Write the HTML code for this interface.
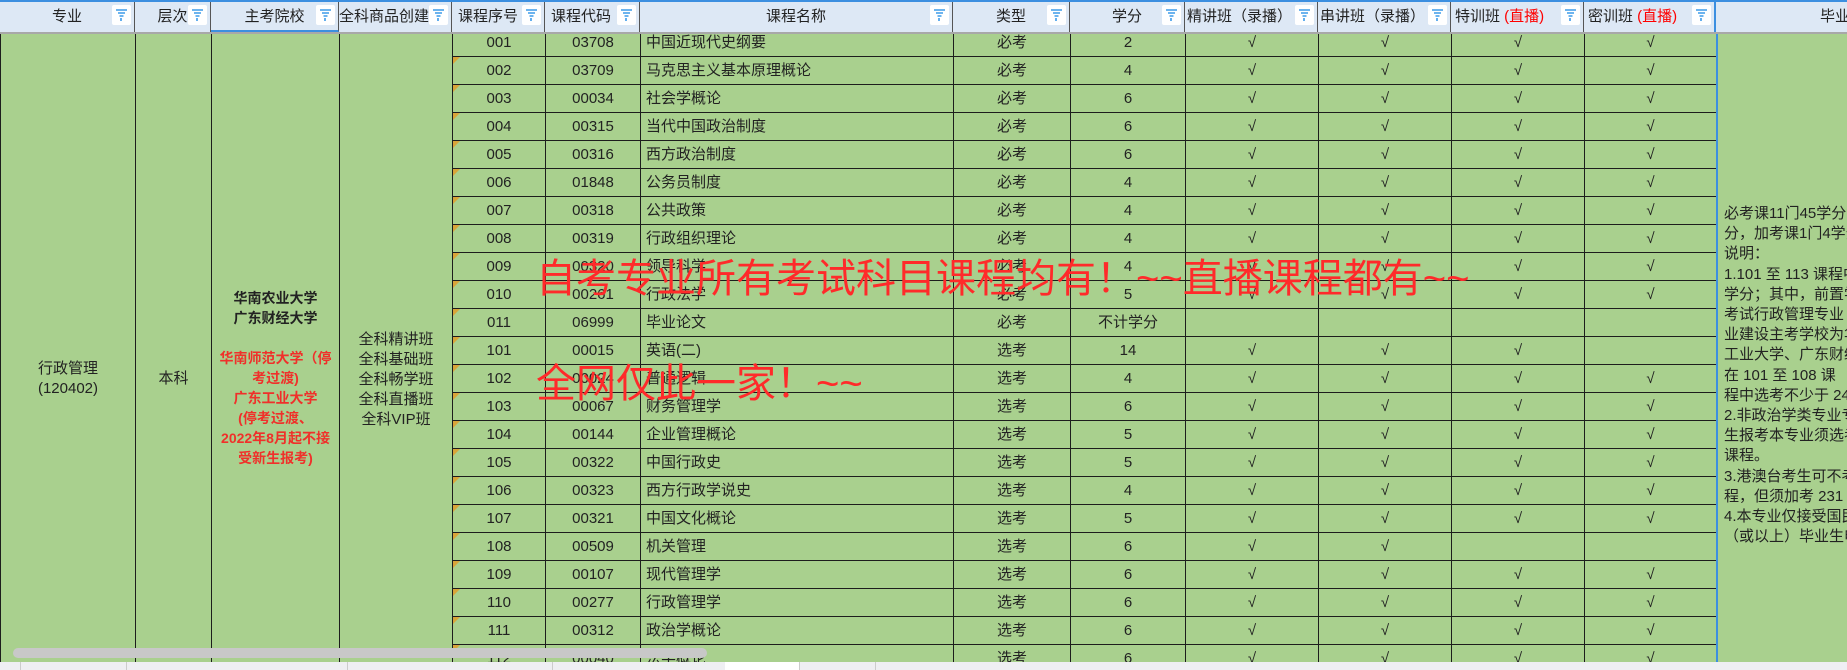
<!DOCTYPE html>
<html style="width:1847px;height:670px;overflow:hidden"><head><meta charset="utf-8">
<style>
*{margin:0;padding:0;box-sizing:border-box}
body{width:1847px;height:670px;overflow:hidden;position:relative;background:#a9d08e;font-family:"Liberation Sans","Noto Sans CJK SC",sans-serif;color:#222}
.wrap{position:absolute;left:0;top:0;width:1847px;height:670px;overflow:hidden}
table{position:absolute;left:0;top:28px;border-collapse:collapse;table-layout:fixed;width:2000px}
td{border:1px solid #1d1d1d;height:28px;font-size:15px;text-align:center;white-space:nowrap;overflow:hidden;position:relative;line-height:26px;padding:0}
td.l{text-align:left;padding-left:5px}
td.tri::before{content:"";position:absolute;left:0;top:0;border-top:7px solid #d9a53a;border-right:7px solid transparent}
td.m{vertical-align:top;line-height:20px;white-space:nowrap;font-size:14px}
.hdr{position:absolute;left:0;top:0;width:1847px;height:34px;background:#dde8f5;border-top:2px solid #3c8fe0;border-bottom:2px solid #a8a8a8;z-index:5}
.hc{position:absolute;top:0;height:30px;border-right:1px solid #555;font-size:15px;line-height:30px;white-space:nowrap;overflow:hidden}
.hc.c{text-align:center}
.f{position:absolute;right:3px;top:3px;width:19px;height:20px;background:#fff;border-radius:2px}
.f svg{position:absolute;left:3px;top:3px}
.red{color:#f00}
.rt{position:absolute;left:1716px;top:34px;width:131px;height:628px;border-left:2px solid #3c8fe0;z-index:3;background:#a9d08e;font-size:15px;line-height:20.2px;padding:170px 0 0 6px;white-space:nowrap;overflow:hidden}
.ov{position:absolute;color:#ff2a2a;font-size:40px;line-height:44px;white-space:nowrap;z-index:4}
.sb{position:absolute;left:0;top:662px;width:1847px;height:8px;background:#efeff3;z-index:6}
.sb i{position:absolute;top:0;width:1px;height:8px;background:#ccc}
.thumb{position:absolute;left:13px;top:648px;width:694px;height:10px;background:#c8c8c8;border-radius:5px;z-index:6}
</style></head><body><div class="wrap">
<div class="hdr">
<div class="hc c" style="left:0;width:135px">专业<span class="f"><svg width="13" height="14"><path d="M1 2h11M3 5h7M4.5 8h4M6 10v3" stroke="#3d9be9" stroke-width="1.6" fill="none"/></svg></span></div>
<div class="hc c" style="left:135px;width:76px">层次<span class="f"><svg width="13" height="14"><path d="M1 2h11M3 5h7M4.5 8h4M6 10v3" stroke="#3d9be9" stroke-width="1.6" fill="none"/></svg></span></div>
<div class="hc c" style="left:211px;width:128px;border-bottom:2px solid #3c8fe0">主考院校<span class="f"><svg width="13" height="14"><path d="M1 2h11M3 5h7M4.5 8h4M6 10v3" stroke="#3d9be9" stroke-width="1.6" fill="none"/></svg></span></div>
<div class="hc" style="left:339px;width:113px">全科商品创建<span class="f"><svg width="13" height="14"><path d="M1 2h11M3 5h7M4.5 8h4M6 10v3" stroke="#3d9be9" stroke-width="1.6" fill="none"/></svg></span></div>
<div class="hc" style="left:452px;width:93px;padding-left:6px">课程序号<span class="f"><svg width="13" height="14"><path d="M1 2h11M3 5h7M4.5 8h4M6 10v3" stroke="#3d9be9" stroke-width="1.6" fill="none"/></svg></span></div>
<div class="hc" style="left:545px;width:95px;padding-left:6px">课程代码<span class="f"><svg width="13" height="14"><path d="M1 2h11M3 5h7M4.5 8h4M6 10v3" stroke="#3d9be9" stroke-width="1.6" fill="none"/></svg></span></div>
<div class="hc c" style="left:640px;width:313px">课程名称<span class="f"><svg width="13" height="14"><path d="M1 2h11M3 5h7M4.5 8h4M6 10v3" stroke="#3d9be9" stroke-width="1.6" fill="none"/></svg></span></div>
<div class="hc c" style="left:953px;width:117px">类型<span class="f"><svg width="13" height="14"><path d="M1 2h11M3 5h7M4.5 8h4M6 10v3" stroke="#3d9be9" stroke-width="1.6" fill="none"/></svg></span></div>
<div class="hc c" style="left:1070px;width:115px">学分<span class="f"><svg width="13" height="14"><path d="M1 2h11M3 5h7M4.5 8h4M6 10v3" stroke="#3d9be9" stroke-width="1.6" fill="none"/></svg></span></div>
<div class="hc" style="left:1185px;width:133px;padding-left:2px">精讲班（录播）<span class="f"><svg width="13" height="14"><path d="M1 2h11M3 5h7M4.5 8h4M6 10v3" stroke="#3d9be9" stroke-width="1.6" fill="none"/></svg></span></div>
<div class="hc" style="left:1318px;width:133px;padding-left:2px">串讲班（录播）<span class="f"><svg width="13" height="14"><path d="M1 2h11M3 5h7M4.5 8h4M6 10v3" stroke="#3d9be9" stroke-width="1.6" fill="none"/></svg></span></div>
<div class="hc" style="left:1451px;width:133px;padding-left:4px">特训班 <span class="red">(直播)</span><span class="f"><svg width="13" height="14"><path d="M1 2h11M3 5h7M4.5 8h4M6 10v3" stroke="#3d9be9" stroke-width="1.6" fill="none"/></svg></span></div>
<div class="hc" style="left:1584px;width:132px;padding-left:4px;border-right:2px solid #3c8fe0">密训班 <span class="red">(直播)</span><span class="f"><svg width="13" height="14"><path d="M1 2h11M3 5h7M4.5 8h4M6 10v3" stroke="#3d9be9" stroke-width="1.6" fill="none"/></svg></span></div>
<div class="hc" style="left:1716px;width:131px;padding-left:104px;border-right:none">毕业要求</div>
</div>

<table>
<colgroup><col style="width:135px"><col style="width:76px"><col style="width:128px"><col style="width:113px"><col style="width:93px"><col style="width:95px"><col style="width:313px"><col style="width:117px"><col style="width:115px"><col style="width:133px"><col style="width:133px"><col style="width:133px"><col style="width:132px"><col style="width:284px"></colgroup>
<tr><td class="m" rowspan="23" style="padding-top:330px;font-size:15px">行政管理<br>(120402)</td><td class="m" rowspan="23" style="padding-top:340px;font-size:15px">本科</td><td class="m" rowspan="23" style="padding-top:259px;font-weight:bold">华南农业大学<br>广东财经大学<br><br><span style="color:#f0302a">华南师范大学（停<br>考过渡)<br>广东工业大学<br>(停考过渡、<br>2022年8月起不接<br>受新生报考)</span></td><td class="m" rowspan="23" style="padding-top:301px;font-size:15px">全科精讲班<br>全科基础班<br>全科畅学班<br>全科直播班<br>全科VIP班</td>
<td>001</td><td>03708</td><td class="l">中国近现代史纲要</td><td>必考</td><td>2</td><td>√</td><td>√</td><td>√</td><td>√</td><td rowspan="23"></td></tr>
<tr><td class="tri">002</td><td>03709</td><td class="l">马克思主义基本原理概论</td><td>必考</td><td>4</td><td>√</td><td>√</td><td>√</td><td>√</td></tr>
<tr><td class="tri">003</td><td>00034</td><td class="l">社会学概论</td><td>必考</td><td>6</td><td>√</td><td>√</td><td>√</td><td>√</td></tr>
<tr><td class="tri">004</td><td>00315</td><td class="l">当代中国政治制度</td><td>必考</td><td>6</td><td>√</td><td>√</td><td>√</td><td>√</td></tr>
<tr><td class="tri">005</td><td>00316</td><td class="l">西方政治制度</td><td>必考</td><td>6</td><td>√</td><td>√</td><td>√</td><td>√</td></tr>
<tr><td class="tri">006</td><td>01848</td><td class="l">公务员制度</td><td>必考</td><td>4</td><td>√</td><td>√</td><td>√</td><td>√</td></tr>
<tr><td class="tri">007</td><td>00318</td><td class="l">公共政策</td><td>必考</td><td>4</td><td>√</td><td>√</td><td>√</td><td>√</td></tr>
<tr><td class="tri">008</td><td>00319</td><td class="l">行政组织理论</td><td>必考</td><td>4</td><td>√</td><td>√</td><td>√</td><td>√</td></tr>
<tr><td class="tri">009</td><td>00320</td><td class="l">领导科学</td><td>必考</td><td>4</td><td>√</td><td>√</td><td>√</td><td>√</td></tr>
<tr><td class="tri">010</td><td>00261</td><td class="l">行政法学</td><td>必考</td><td>5</td><td>√</td><td>√</td><td>√</td><td>√</td></tr>
<tr><td class="tri">011</td><td>06999</td><td class="l">毕业论文</td><td>必考</td><td>不计学分</td><td></td><td></td><td></td><td></td></tr>
<tr><td class="tri">101</td><td>00015</td><td class="l">英语(二)</td><td>选考</td><td>14</td><td>√</td><td>√</td><td>√</td><td></td></tr>
<tr><td class="tri">102</td><td>00024</td><td class="l">普通逻辑</td><td>选考</td><td>4</td><td>√</td><td>√</td><td>√</td><td>√</td></tr>
<tr><td class="tri">103</td><td>00067</td><td class="l">财务管理学</td><td>选考</td><td>6</td><td>√</td><td>√</td><td>√</td><td>√</td></tr>
<tr><td class="tri">104</td><td>00144</td><td class="l">企业管理概论</td><td>选考</td><td>5</td><td>√</td><td>√</td><td>√</td><td>√</td></tr>
<tr><td class="tri">105</td><td>00322</td><td class="l">中国行政史</td><td>选考</td><td>5</td><td>√</td><td>√</td><td>√</td><td>√</td></tr>
<tr><td class="tri">106</td><td>00323</td><td class="l">西方行政学说史</td><td>选考</td><td>4</td><td>√</td><td>√</td><td>√</td><td>√</td></tr>
<tr><td class="tri">107</td><td>00321</td><td class="l">中国文化概论</td><td>选考</td><td>5</td><td>√</td><td>√</td><td>√</td><td>√</td></tr>
<tr><td class="tri">108</td><td>00509</td><td class="l">机关管理</td><td>选考</td><td>6</td><td>√</td><td>√</td><td></td><td></td></tr>
<tr><td class="tri">109</td><td>00107</td><td class="l">现代管理学</td><td>选考</td><td>6</td><td>√</td><td>√</td><td>√</td><td>√</td></tr>
<tr><td class="tri">110</td><td>00277</td><td class="l">行政管理学</td><td>选考</td><td>6</td><td>√</td><td>√</td><td>√</td><td>√</td></tr>
<tr><td class="tri">111</td><td>00312</td><td class="l">政治学概论</td><td>选考</td><td>6</td><td>√</td><td>√</td><td>√</td><td>√</td></tr>
<tr><td class="tri">112</td><td>00040</td><td class="l">法学概论</td><td>选考</td><td>6</td><td>√</td><td>√</td><td>√</td><td>√</td></tr>
</table>

<div class="rt">必考课11门45学分，选考课<br>分，加考课1门4学分<br>说明：<br>1.101 至 113 课程中<br>学分；其中，前置学<br>考试行政管理专业<br>业建设主考学校为华<br>工业大学、广东财经<br>在 101 至 108 课<br>程中选考不少于 24<br>2.非政治学类专业专<br>生报考本专业须选考<br>课程。<br>3.港澳台考生可不考<br>程，但须加考 231 i<br>4.本专业仅接受国民<br>（或以上）毕业生申</div>

<div class="ov" style="left:536px;top:257px">自考专业所有考试科目课程均有！~~直播课程都有~~</div>
<div class="ov" style="left:536px;top:362px">全网仅此一家！~~</div>

<div class="thumb"></div>
<div class="sb"><i style="left:20px"></i><i style="left:126px"></i><i style="left:347px"></i><i style="left:552px"></i><span style="position:absolute;left:725px;top:0;width:74px;height:8px;background:#fff"></span><i style="left:799px"></i><i style="left:875px"></i></div>
</div></body></html>
